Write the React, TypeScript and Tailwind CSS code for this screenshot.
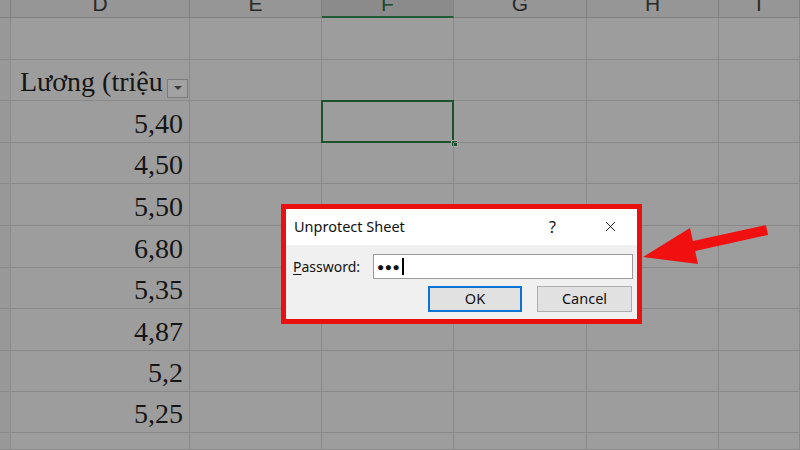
import { X } from 'lucide-react'

const cols = ['', 'D', 'E', 'F', 'G', 'H', 'I']

const rows: { label?: string; value?: string }[] = [
  {},
  { label: 'Lương (triệu' },
  { value: '5,40' },
  { value: '4,50' },
  { value: '5,50' },
  { value: '6,80' },
  { value: '5,35' },
  { value: '4,87' },
  { value: '5,2' },
  { value: '5,25' },
  {},
]

function HeaderRow() {
  return (
    <>
      {cols.map((c, i) => (
        <div
          key={i}
          className={
            c === 'F'
              ? 'flex items-end justify-center overflow-hidden border-r border-[#858585] border-b-2 border-b-[#1f5a34] bg-[#8b8b8b] text-[#1c4a2c] pb-[2px]'
              : 'flex items-end justify-center overflow-hidden border-r border-b border-[#7f7f7f] bg-[#969696] text-[#2a2a2a] pb-[3px]'
          }
        >
          <span className="font-['Liberation_Sans',sans-serif] text-[21px] leading-none">{c}</span>
        </div>
      ))}
    </>
  )
}

function Cell({ children, className = '' }: { children?: React.ReactNode; className?: string }) {
  return <div className={'relative border-r border-b border-[#8a8a8a] ' + className}>{children}</div>
}

function DataRow({ label, value, r }: { label?: string; value?: string; r: number }) {
  return (
    <>
      <Cell className="bg-[#989898]" />
      <Cell className="flex items-end overflow-hidden pb-[4px] font-['Liberation_Serif',serif] text-[28px] leading-none text-[#151515]">
        {label && (
          <>
            <span className="whitespace-nowrap pl-[9px]">{label}</span>
            <div className="absolute right-[1px] bottom-[2px] flex h-[19px] w-[21px] items-center justify-center border border-[#7b7b7b] bg-[#a2a2a2]">
              <svg width="8" height="5" viewBox="0 0 8 5">
                <path d="M0 0h8L4 4z" fill="#3a3a3a" />
              </svg>
            </div>
          </>
        )}
        {value && <span className="ml-auto pr-[6px]">{value}</span>}
      </Cell>
      <Cell />
      <Cell>
        {r === 2 && (
          <>
            <div className="absolute inset-[-1px] border-2 border-[#1d5230]" />
            <div className="absolute right-[-5px] bottom-[-5px] h-[7px] w-[7px] border border-[#a8a8a8] bg-[#1d5230]" />
          </>
        )}
      </Cell>
      <Cell />
      <Cell />
      <Cell />
    </>
  )
}

export default function App() {
  return (
    <div className="relative h-[450px] w-[800px] overflow-hidden bg-[#9d9d9d]">
      <div className="grid h-full grid-cols-[11px_179px_132px_132px_133px_132px_1fr] grid-rows-[18px_42px_41px_42px_41px_42px_42px_41px_42px_41px_41px_1fr]">
        <HeaderRow />
        {rows.map((row, r) => (
          <DataRow key={r} r={r} label={row.label} value={row.value} />
        ))}
      </div>

      {/* dialog, outlined in red */}
      <div className="absolute left-[281px] top-[204px] flex h-[120px] w-[361px] flex-col border-[5px] border-[#ea1010] font-['Noto_Sans',sans-serif] text-[#111]">
        <div className="flex h-[36px] items-center bg-white pl-[8px] pb-[1px]">
          <span className="text-[14.5px]">Unprotect Sheet</span>
          <span className="ml-auto mr-[46px] text-[16px]">?</span>
          <X className="mr-[18px] h-[17px] w-[17px]" strokeWidth={1.3} />
        </div>
        <div className="flex flex-1 flex-col bg-[#f0f0f0] pt-[9px] pr-[4px] pl-[7px]">
          <div className="flex items-center">
            <span className="w-[80px] text-[14px]">
              <span className="underline underline-offset-2">P</span>assword:
            </span>
            <div className="flex h-[25px] flex-1 items-center border border-[#9a9a9a] bg-white pl-[3px]">
              <span className="text-[12px] tracking-[0.5px] leading-none">●●●</span>
              <span className="ml-[2px] h-[17px] w-[1.5px] bg-black" />
            </div>
          </div>
          <div className="mt-[7px] flex justify-end gap-[15px] pr-[1px]">
            <button className="flex h-[26px] w-[94px] items-center justify-center border-2 border-[#0a74d4] bg-[#e1e1e1] text-[14.5px]">
              OK
            </button>
            <button className="flex h-[26px] w-[95px] items-center justify-center border border-[#adadad] bg-[#e1e1e1] text-[14.5px]">
              Cancel
            </button>
          </div>
        </div>
      </div>

      {/* annotation arrow */}
      <svg className="absolute inset-0" width="800" height="450" viewBox="0 0 800 450">
        <polygon
          points="643,257 690,228 692.9,241.1 765.9,225.1 768.1,234.9 695.1,250.9 698,264"
          fill="#f01010"
        />
      </svg>
    </div>
  )
}
